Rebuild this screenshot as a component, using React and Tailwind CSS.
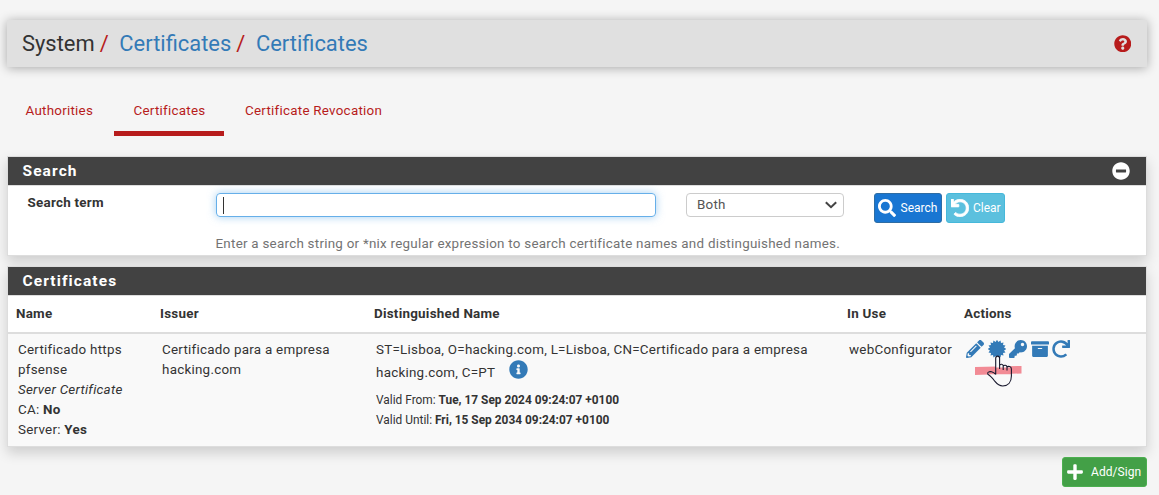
import React from "react";
import {
  FaQuestionCircle,
  FaMinusCircle,
  FaSearch,
  FaUndo,
  FaRedo,
  FaInfoCircle,
  FaPencilAlt,
  FaKey,
  FaArchive,
  FaPlus,
} from "react-icons/fa";

function Panel({ title, action, children, className }) {
  return (
    <section className={`border border-[#ddd] bg-white shadow-[0_6px_12px_rgba(0,0,0,0.16)] ${className}`}>
      <div className="flex h-[29px] items-center justify-between border-b border-[#ddd] bg-[#424242] pl-[14.5px] pr-4 text-white">
        <h2 className="text-[15.5px] font-bold leading-5 tracking-[1.1px]">{title}</h2>
        {action}
      </div>
      {children}
    </section>
  );
}

const sealPoints = Array.from({ length: 32 }, (_, i) => {
  const radius = i % 2 ? 7.2 : 9.2;
  const angle = (i * Math.PI) / 16;
  return `${(9 + radius * Math.sin(angle)).toFixed(2)},${(9 - radius * Math.cos(angle)).toFixed(2)}`;
}).join(" ");

function SealIcon() {
  return (
    <svg className="size-[18px]" viewBox="0 0 18 18" fill="currentColor">
      <polygon points={sealPoints} />
    </svg>
  );
}

function HandCursor() {
  return (
    <svg className="absolute left-[10px] top-[15px] h-8 w-[26px]" viewBox="0 0 26 32" fill="none">
      <path
        d="M8.7 18V3.2C8.7 .4 12.6 .4 12.6 3.2V10C13.2 8.4 16 8.7 16.2 11C17 9.6 19.5 10 19.7 12C20.8 10.8 24 11 24 14V21C24 27.5 20.8 31 15.8 31C11.5 31 9.6 28.5 7.6 26C5.3 23 3.7 21 1.2 19.6C-.4 17.4 2.4 16.2 4.6 16.8C6.2 17.3 7.5 17.8 8.7 19.5"
        fill="#f9f9f9"
      />
      <path d="M-1 12.5H26V19.3H-1Z" fill="#f28b95" clipPath="url(#hand)" />
      <clipPath id="hand">
        <path d="M8.7 18V12H24V21H2C0 18 2.4 16.2 4.6 16.8C6.2 17.3 7.5 17.8 8.7 19.5Z" />
      </clipPath>
      <path
        d="M8.7 19.5V3.2C8.7 .4 12.6 .4 12.6 3.2V14M12.6 10.6C13.2 8.6 16.2 8.7 16.2 11V15M16.2 11.4C17 9.6 20 10 20 12.2V15.5M20 12.2C21 10.8 24.4 11.2 24.4 14V21C24.4 27.5 20.8 31 15.8 31C11.5 31 9.6 28.5 7.6 26C5.3 23 3.7 21 1.2 19.6C-.4 17.4 2.4 16.2 4.6 16.8C6.2 17.3 7.5 17.8 8.7 19.5"
        stroke="#17172c"
        strokeWidth="1.1"
        strokeLinejoin="round"
      />
    </svg>
  );
}

export default function App() {
  return (
    <div className="min-h-[495px] w-full bg-[#f5f5f5] pl-[7px] pr-3 pt-5 font-['Roboto',sans-serif] text-[13.4px] leading-5 tracking-[0.25px] text-[#333]">
      <header className="flex h-[47px] items-center justify-between bg-[#e0e0e0] pl-[15px] pr-4 shadow-[0_1px_10px_rgba(0,0,0,0.32)]">
        <nav className="flex items-center whitespace-pre text-[21.9px] leading-6 tracking-normal text-[#337ab7]">
          <span className="text-[#333]">System</span>
          <span className="ml-[5px] mr-[10.7px] text-[#b71c1c]">/</span>
          <span>Certificates</span>
          <span className="ml-[5px] mr-[10.7px] text-[#b71c1c]">/</span>
          <span>Certificates</span>
        </nav>
        <FaQuestionCircle className="size-[17.5px] text-[#b71c1c]" />
      </header>

      <nav className="mt-[22px] flex h-[47px] leading-[43px] text-[#b71c1c]">
        <span className="w-[107px] pl-[18.5px]">Authorities</span>
        <span className="w-[110px] border-b-[5px] border-[#b71c1c] pl-[19.5px]">Certificates</span>
        <span className="pl-[21px]">Certificate Revocation</span>
      </nav>

      <Panel title="Search" className="mt-5 h-[100px]" action={<FaMinusCircle className="size-[18px]" />}>
        <div className="flex pt-[7px]">
          <label className="w-[208px] pl-[19.5px] font-bold leading-5">Search term</label>
          <div className="w-[440px]">
            <div className="flex h-6 items-center rounded-[4px] border border-[#66afe9] pl-[6px] shadow-[0_0_8px_rgba(102,175,233,0.6)]">
              <span className="h-[17px] w-px bg-[#333]" />
            </div>
            <p className="-ml-[0.5px] mt-[17px] whitespace-nowrap text-[#737373]">
              Enter a search string or *nix regular expression to search certificate names and distinguished names.
            </p>
          </div>
          <div className="ml-[30px] flex h-6 w-[158px] items-center justify-between rounded-[4px] border border-[#ccc] pl-[10px] pr-[6px] text-[#555]">
            <span>Both</span>
            <svg viewBox="0 0 12 8" className="h-2 w-3" fill="none" stroke="#444" strokeWidth="2">
              <path d="M.8 1.2 6 6.2 11.2 1.2" />
            </svg>
          </div>
          <button className="ml-[30px] flex h-[30px] w-[68px] items-center gap-[4.5px] rounded-[3px] border border-[#2e6da4] bg-[#1976d2] pl-[3px] text-[12px] tracking-normal text-white">
            <FaSearch className="size-[18px]" />
            Search
          </button>
          <button className="ml-1 flex h-[30px] w-[59px] items-center gap-1 rounded-[3px] border border-[#46b8da] bg-[#5bc0de] pl-[4px] text-[12px] tracking-normal text-white">
            <FaUndo className="size-[18px]" stroke="currentColor" strokeWidth="22" />
            Clear
          </button>
        </div>
      </Panel>

      <Panel title="Certificates" className="mt-[10px] h-[181px]">
        <div className="grid h-[38px] grid-cols-[144px_214px_473px_117px_1fr] border-b-2 border-[#ddd] pl-2 pt-2 font-bold">
          <span>Name</span>
          <span>Issuer</span>
          <span>Distinguished Name</span>
          <span>In Use</span>
          <span>Actions</span>
        </div>
        <div className="grid h-28 grid-cols-[144px_214px_473px_117px_1fr] bg-[#f9f9f9] pl-[10px] pt-1.5">
          <div>
            Certificado https<br />pfsense<br />
            <i>Server Certificate</i><br />
            CA: <b>No</b><br />
            Server: <b>Yes</b>
          </div>
          <div>Certificado para a empresa<br />hacking.com</div>
          <div>
            <div>ST=Lisboa, O=hacking.com, L=Lisboa, CN=Certificado para a empresa</div>
            <div className="flex h-[30px] pt-[3px]">
              hacking.com, C=PT
              <FaInfoCircle className="-mt-[3px] ml-[14px] size-[19px] text-[#337ab7]" />
            </div>
            <div className="text-[11.9px] tracking-normal">
              Valid From: <b>Tue, 17 Sep 2024 09:24:07 +0100</b><br />
              Valid Until: <b>Fri, 15 Sep 2034 09:24:07 +0100</b>
            </div>
          </div>
          <div>webConfigurator</div>
          <div className="relative flex gap-[3.5px] text-[#337ab7]">
            <FaPencilAlt className="size-[18px]" />
            <SealIcon />
            <FaKey className="size-[18px]" />
            <FaArchive className="size-[18px]" />
            <FaRedo className="size-[18px]" />
            <svg className="absolute left-[9px] top-[26px] h-[9px] w-[47px]" viewBox="0 0 47 9">
              <path d="M0 1 46.5 0V7.5L0 9Z" fill="#f28b95" />
            </svg>
            <div className="absolute left-[11px] top-0">
              <HandCursor />
            </div>
          </div>
        </div>
      </Panel>

      <div className="mt-[10px] flex justify-end">
        <button className="flex h-[30px] w-[85px] items-center gap-[7px] rounded-[3px] border border-[#4caf50] bg-[#43a047] pl-[3px] text-[12px] tracking-[0.06px] text-white">
          <FaPlus className="size-[18px]" />
          Add/Sign
        </button>
      </div>
    </div>
  );
}
